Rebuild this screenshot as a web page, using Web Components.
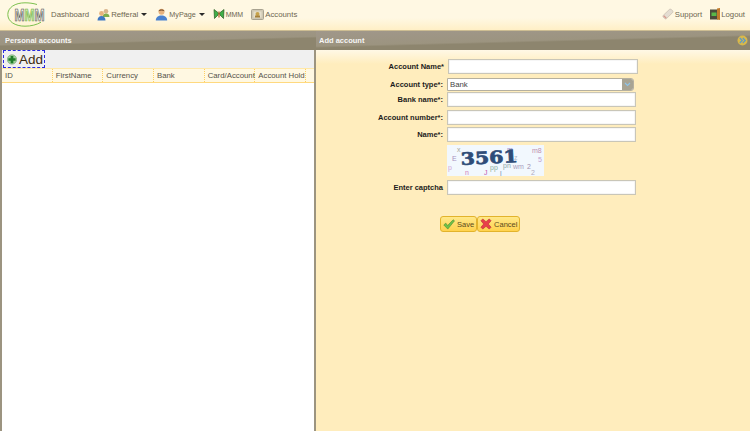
<!DOCTYPE html>
<html>
<head>
<meta charset="utf-8">
<title>Accounts</title>
<style>
  html, body { margin: 0; padding: 0; height: 100%; overflow: hidden; }
  body { font-family: "Liberation Sans", Arial, sans-serif; font-size: 8px; background: #ffedbd; }
</style>
</head>
<body>

<app-shell>
  <top-bar slot="top"></top-bar>
  <side-panel slot="left" heading="Personal accounts"></side-panel>
  <add-account slot="right" heading="Add account"></add-account>
</app-shell>

<script>
const ICONS = {
  referral: `<svg width="13" height="13" viewBox="0 0 13 13"><circle cx="9" cy="3.200" r="2.300" fill="#d9b48a"/><path d="M5.500 9c0-2.500 1.500-3.600 3.500-3.600s3.500 1.100 3.500 3.600z" fill="#7fae4c"/><circle cx="4.500" cy="5.500" r="2.400" fill="#e8b37e"/><path d="M.5 12.500c0-3 1.700-4.500 4-4.500s4 1.500 4 4.500z" fill="#3f78c4"/></svg>`,
  mypage: `<svg width="13" height="13" viewBox="0 0 13 13"><circle cx="6.500" cy="3.800" r="3" fill="#e8b37e"/><path d="M3.500 3.200C4 1 9 1 9.500 3.200 8 2.400 5 2.400 3.500 3.200z" fill="#6b4423"/><path d="M.8 12.500c0-3.500 2.400-5 5.700-5s5.700 1.500 5.700 5z" fill="#4a82d0"/></svg>`,
  butterfly: `<svg width="12" height="12" viewBox="0 0 12 12"><path d="M1 1.500 5.500 5 5 7 1.500 10.500z" fill="#3fb04a" stroke="#2a5a20" stroke-width=".7"/><path d="M11 1.500 6.500 5 7 7l3.500 3.500z" fill="#3fb04a" stroke="#2a5a20" stroke-width=".7"/><path d="M6 3.500v6" stroke="#b25a20" stroke-width="1.200"/></svg>`,
  accounts: `<svg width="13" height="12" viewBox="0 0 13 12"><rect x=".5" y="1.500" width="12" height="10" rx="1" fill="#cfc8b4" stroke="#a8a290"/><rect x="2.500" y="3.500" width="8" height="6" fill="#e5dfcc"/><circle cx="6.500" cy="6" r="2" fill="#c7a24a"/><rect x="4" y="7.500" width="5" height="2" fill="#a5803a"/></svg>`,
  support: `<svg width="12" height="12" viewBox="0 0 14 14"><path d="M1.500 8.500 8.500 1.800c.8-.7 1.800-.6 2.500 0l1.300 1.300c.7.700.7 1.700 0 2.400L5.300 12.300c-.7.600-1.600.6-2.200 0L1.500 10.700c-.6-.6-.6-1.600 0-2.200z" fill="#e4ddd2" stroke="#c0b4a4" stroke-width=".7"/><path d="M2 9l3 3" stroke="#d89a8c" stroke-width="1.500"/></svg>`,
  logout: `<svg width="10" height="12" viewBox="0 0 10 12"><rect x="0" y="1.500" width="8" height="10" fill="#4a4a3a"/><path d="M7 .5 10 0v12l-3-.5z" fill="#c07a2a"/><rect x="1.500" y="4.500" width="5" height="3.500" fill="#58b848"/></svg>`,
  plus: `<svg width="11" height="11" viewBox="0 0 11 11"><circle cx="5.500" cy="5.500" r="5.200" fill="#9fd29a" stroke="#6a9a68" stroke-width=".6"/><path d="M4 1.500h3V4h2.500v3H7v2.500H4V7H1.500V4H4z" fill="#1f7d2a"/></svg>`,
  check: `<svg width="12" height="11" viewBox="0 0 13 12"><path d="M.8 6.500 3 4.500l2 2.600L11 .8l1.500 1.200L5.200 11z" fill="#6fc04a" stroke="#3f8a2a" stroke-width=".6"/></svg>`,
  cross: `<svg width="12" height="12" viewBox="0 0 13 13"><path d="M1 3 3 1l3.500 3L10 1l2 2-3 3.500 3 3.500-2 2-3.500-3L3 12l-2-2 3-3.500z" fill="#e8404a" stroke="#b02a30" stroke-width=".6"/></svg>`
};

class AppShell extends HTMLElement {
  constructor() {
    super();
    this.attachShadow({mode: 'open'});
    this.shadowRoot.innerHTML = `
      <style>
        :host { display: grid; grid-template-columns: 316px 1fr; grid-template-rows: 30px 1fr; width: 750px; height: 431px; overflow: hidden; }
        ::slotted([slot=top]) { grid-column: 1 / 3; }
      </style>
      <slot name="top"></slot>
      <slot name="left"></slot>
      <slot name="right"></slot>`;
  }
}

class NavItem extends HTMLElement {
  constructor() {
    super();
    this.attachShadow({mode: 'open'});
    const icon = this.getAttribute('icon');
    const caret = this.hasAttribute('caret') ? '<i></i>' : '';
    this.shadowRoot.innerHTML = `
      <style>
        :host { display: inline-flex; align-items: center; gap: 1px; color: #6e6650; font-size: 7.800px; white-space: nowrap; }
        svg { display: block; }
        i { width: 0; height: 0; border: 3px solid transparent; border-top: 3.500px solid #2a2a2a; border-bottom: 0; margin-left: 2px; }
      </style>
      ${icon ? ICONS[icon] : ''}<slot></slot>${caret}`;
  }
}

class TopBar extends HTMLElement {
  constructor() {
    super();
    this.attachShadow({mode: 'open'});
    this.shadowRoot.innerHTML = `
      <style>
        :host { display: flex; align-items: center; padding: 0 5px 2px 7px; background: linear-gradient(#fff8e3 0, #fff8e3 60%, #ffefc6 100%); box-sizing: border-box; }
        .logo { display: block; margin-right: 6px; }
        .items { display: flex; align-items: center; gap: 8px; }
        .end { display: flex; align-items: center; gap: 8px; margin-left: auto; }
        text { font-family: "Liberation Sans", sans-serif; font-weight: bold; font-size: 12px; }
      </style>
      <svg class="logo" width="38" height="25" viewBox="0 0 38 25">
        <path d="M30 2.500C26 1.300 22 .8 18 .8 8 .8 .8 5.500 .8 12.500S8 24.200 18 24.200c6 0 12-1.500 16-4" fill="none" stroke="#7cc04e" stroke-width="1"/>
        <text transform="translate(7.500 18.500) scale(1 1.300)" stroke-width=".5"><tspan fill="#e8e8e0" stroke="#4a4a48">M</tspan><tspan fill="#c8e8a8" stroke="#6cae40">M</tspan><tspan fill="#e8e8e0" stroke="#4a4a48">M</tspan></text>
      </svg>
      <div class="items">
        <nav-item>Dashboard</nav-item>
        <nav-item icon="referral" caret>Refferal</nav-item>
        <nav-item icon="mypage" caret style="font-size:7.200px">MyPage</nav-item>
        <nav-item icon="butterfly" style="font-size:7px">MMM</nav-item>
        <nav-item icon="accounts">Accounts</nav-item>
      </div>
      <div class="end">
        <nav-item icon="support">Support</nav-item>
        <nav-item icon="logout">Logout</nav-item>
      </div>`;
  }
}

class PanelHeader extends HTMLElement {
  constructor() {
    super();
    this.attachShadow({mode: 'open'});
    this.shadowRoot.innerHTML = `
      <style>
        :host { display: flex; align-items: center; justify-content: space-between; height: 20px; box-sizing: border-box; padding: 0 2px 0 var(--title-left, 3px);
          border-top: 1px solid #cdbd92; color: #fff; font-weight: bold; font-size: 7.500px;
          background: linear-gradient(178.500deg, #a0978a 0, #9c9480 50%, #8d856e 56%, #8d856e 100%); }
        .t { opacity: .92; }
      </style>
      <span class="t"><slot></slot></span><slot name="tool"></slot>`;
  }
}

class SidePanel extends HTMLElement {
  constructor() {
    super();
    this.attachShadow({mode: 'open'});
    const cols = ['ID', 'FirstName', 'Currency', 'Bank', 'Card/Account', 'Account Hold'];
    this.shadowRoot.innerHTML = `
      <style>
        :host { display: flex; flex-direction: column; min-height: 0; background: #fff; --title-left: 5px; }
        .body { flex: 1; display: flex; flex-direction: column; border-left: 2px solid #9c9480; border-right: 2px solid #9c9480; }
        .bar { height: 18px; background: #f0f0f0; display: flex; }
        .add { display: flex; align-items: center; gap: 2px; margin-left: 1px; padding: 0 1px 0 3px; width: 42px; box-sizing: border-box; border: 1px dashed #2a2ae0; color: #3d2a10; font-size: 13.500px; }
        .add svg { display: block; }
        .head { display: flex; height: 15px; box-sizing: border-box; background: #fff8e2; border-top: 1px solid #ffe8a8; border-bottom: 1px solid #ffd97f; }
        .head div { width: 50.670px; flex: none; box-sizing: border-box; padding: 1px 0 0 3px; color: #55524a; font-size: 7.800px; line-height: 11px; white-space: nowrap; border-right: 1px dotted #ffd060; }
        .fill { flex: 1; }
      </style>
      <panel-header>${this.getAttribute('heading')}</panel-header>
      <div class="body">
        <div class="bar"><div class="add">${ICONS.plus}<span>Add</span></div></div>
        <div class="head">${cols.map(c => `<div>${c}</div>`).join('')}</div>
        <div class="fill"></div>
      </div>`;
  }
}

class FormRow extends HTMLElement {
  constructor() {
    super();
    this.attachShadow({mode: 'open'});
    const w = this.getAttribute('width') || '189px';
    const h = this.getAttribute('height') || '15px';
    this.shadowRoot.innerHTML = `
      <style>
        :host { display: grid; grid-template-columns: 127px auto; column-gap: 4px; align-items: center; }
        label { text-align: right; font-weight: bold; color: #1c1c1c; font-size: 7.500px; white-space: nowrap; }
        .box { width: ${w}; height: ${h}; box-sizing: border-box; background: #fff; border: 1px solid #c9c6b8; box-shadow: inset 0 0 0 .5px #eee; }
      </style>
      <label>${this.getAttribute('label') || ''}</label>
      <div><slot><div class="box"></div></slot></div>`;
  }
}

class SelectBox extends HTMLElement {
  constructor() {
    super();
    this.attachShadow({mode: 'open'});
    this.shadowRoot.innerHTML = `
      <style>
        :host { display: flex; width: 187px; height: 13px; box-sizing: border-box; border: 1px solid #b5b0a0; border-radius: 0 3px 3px 0; background: #fff; overflow: hidden; }
        span { flex: 1; padding-left: 2px; line-height: 12px; color: #444; font-size: 7.800px; }
        b { width: 11px; background: #a8a494; display: flex; align-items: center; justify-content: center; }
        svg { display: block; }
      </style>
      <span><slot></slot></span>
      <b><svg width="7" height="5" viewBox="0 0 7 5"><path d="M1 1l2.500 2.500L6 1" fill="none" stroke="#8fc4e8" stroke-width="1.200"/></svg></b>`;
  }
}

class CaptchaImage extends HTMLElement {
  constructor() {
    super();
    this.attachShadow({mode: 'open'});
    const noise = [
      [10,7,'x','#a8a898'],[60,7,'m','#9a90d0'],[85,8,'m8','#c090b0'],
      [5,16,'E','#a890c0'],[67,15,'z','#b0b8c8'],[91,17,'5','#c0a0d0'],
      [43,25,'pp','#90b0a0'],[56,23,'pn','#90a8a8'],[66,24,'wm','#a8a0c0'],[80,24,'2','#a090b0'],
      [1,25,'p','#d0a8d8'],[18,30,'n','#d080c0'],[37,30,'J','#c060b0'],[53,31,'l','#7090b0'],[84,30,'2','#b0a8c0']
    ];
    this.shadowRoot.innerHTML = `
      <style>
        :host { display: block; width: 97px; height: 31px; background: #f2f8fe; }
        svg { display: block; }
        text { font-family: "Liberation Sans", sans-serif; font-size: 7px; }
        .code { font-family: "DejaVu Serif", "Liberation Serif", serif; font-weight: bold; font-size: 17px; fill: #2e4c78; stroke: #2e4c78; stroke-width: .7; }
      </style>
      <svg width="97" height="31" viewBox="0 0 97 31">
        ${noise.map(n => `<text x="${n[0]}" y="${n[1]}" fill="${n[3]}">${n[2]}</text>`).join('')}
        <text class="code" x="14" y="20" transform="rotate(-3 14 20)" textLength="57" lengthAdjust="spacingAndGlyphs">3561</text>
      </svg>`;
  }
}

class IconButton extends HTMLElement {
  constructor() {
    super();
    this.attachShadow({mode: 'open'});
    this.shadowRoot.innerHTML = `
      <style>
        :host { display: inline-flex; align-items: center; gap: 2px; height: 16px; box-sizing: border-box; padding: 0 2px 0 2px; border: 1px solid #e2b32c; border-radius: 3px;
          background: linear-gradient(#ffe88a, #ffd24d); color: #5a4a20; font-size: 7.500px; }
        svg { display: block; }
      </style>
      ${ICONS[this.getAttribute('icon')]}<slot></slot>`;
  }
}

class AddAccount extends HTMLElement {
  constructor() {
    super();
    this.attachShadow({mode: 'open'});
    this.shadowRoot.innerHTML = `
      <style>
        :host { display: flex; flex-direction: column; min-height: 0; }
        .dot { width: 11px; height: 11px; display: block; }
        .wrap { background: linear-gradient(#fff8e6 0, #ffedbd 14px); flex: 1; }
        form { display: flex; flex-direction: column; padding: 9px 0 0 0; }
        .buttons { display: flex; gap: 0; padding: 21px 0 0 124px; }
      </style>
      <panel-header>${this.getAttribute('heading')}
        <svg slot="tool" class="dot" viewBox="0 0 11 11"><circle cx="5.500" cy="5.500" r="5" fill="#d9b84a"/><path d="M2.800 3l2.500 2.500L2.800 8M5.800 3l2.500 2.500L5.800 8" fill="none" stroke="#5a9ac8" stroke-width="1.200"/></svg>
      </panel-header>
      <div class="wrap">
        <form>
          <form-row label="Account Name*" width="190px" style="margin-left:1px"></form-row>
          <form-row label="Account type*:" style="margin-top:4px"><select-box>Bank</select-box></form-row>
          <form-row label="Bank name*:" style="margin-top:1px"></form-row>
          <form-row label="Account number*:" style="margin-top:3px"></form-row>
          <form-row label="Name*:" style="margin-top:2px"></form-row>
          <form-row style="margin-top:3px"><captcha-image></captcha-image></form-row>
          <form-row label="Enter captcha" style="margin-top:4px"></form-row>
          <div class="buttons">
            <icon-button icon="check">Save</icon-button>
            <icon-button icon="cross">Cancel</icon-button>
          </div>
        </form>
      </div>`;
  }
}

customElements.define('app-shell', AppShell);
customElements.define('nav-item', NavItem);
customElements.define('top-bar', TopBar);
customElements.define('panel-header', PanelHeader);
customElements.define('side-panel', SidePanel);
customElements.define('form-row', FormRow);
customElements.define('select-box', SelectBox);
customElements.define('captcha-image', CaptchaImage);
customElements.define('icon-button', IconButton);
customElements.define('add-account', AddAccount);
</script>
</body>
</html>
